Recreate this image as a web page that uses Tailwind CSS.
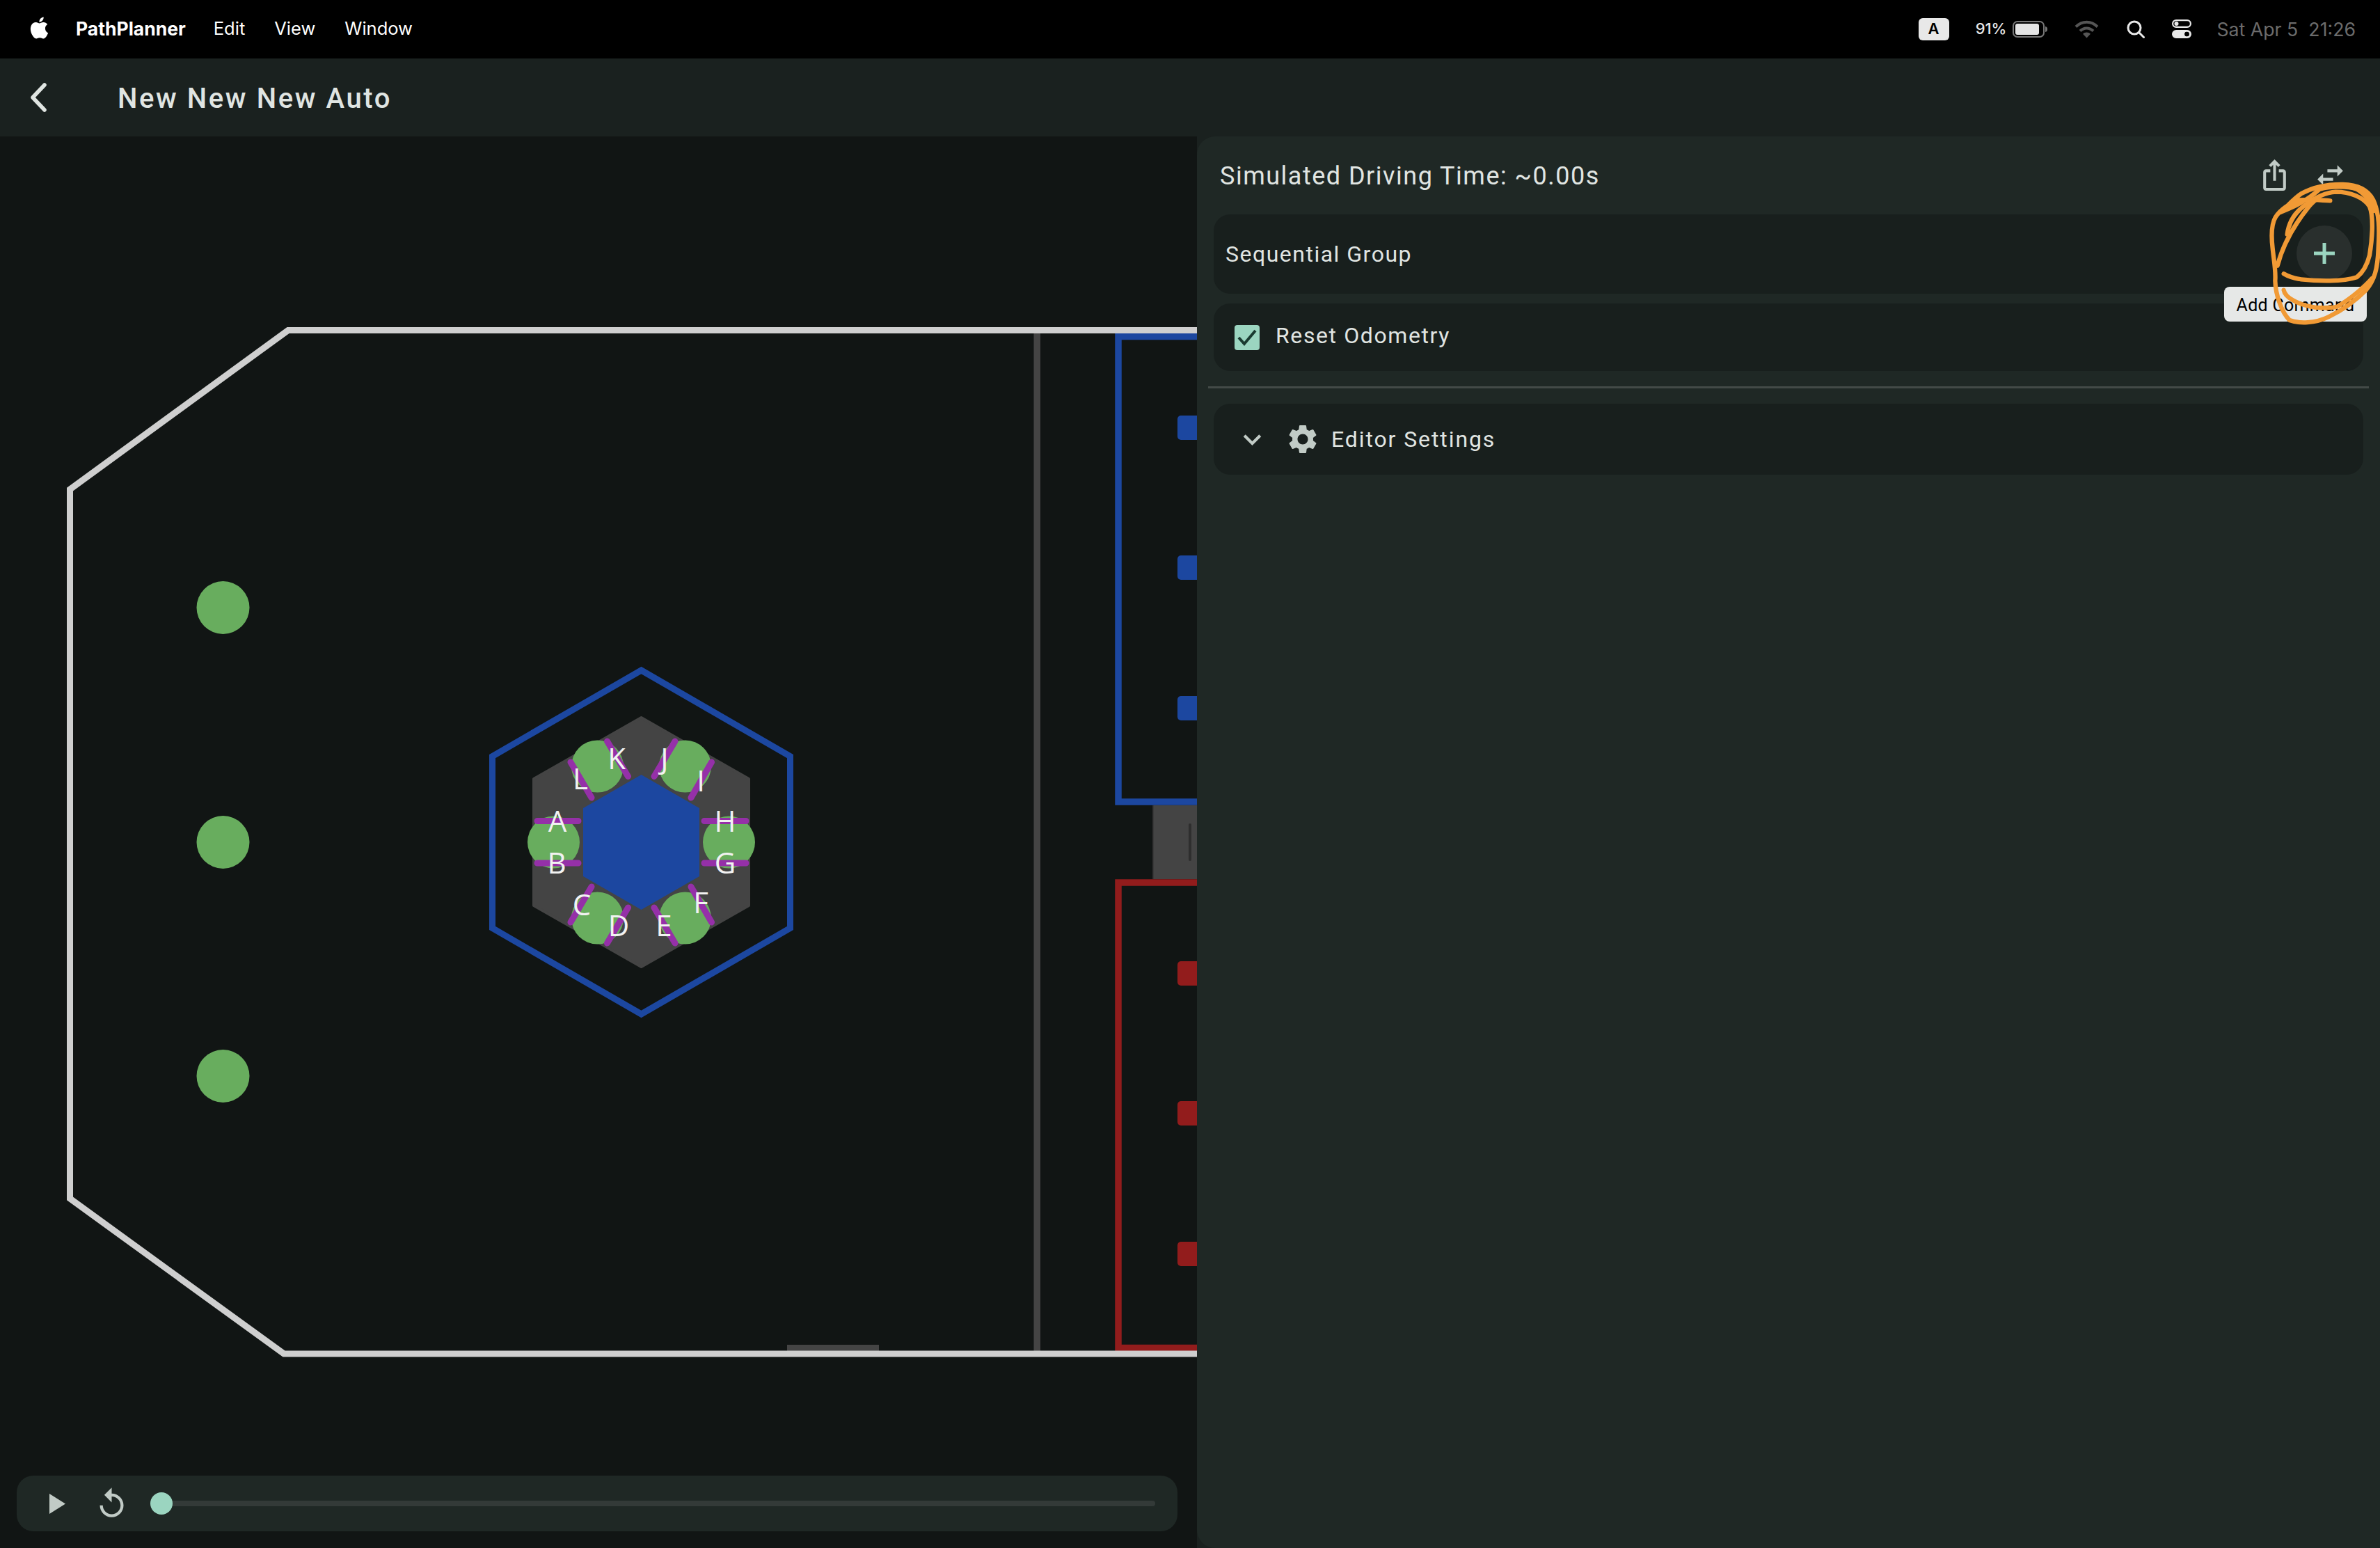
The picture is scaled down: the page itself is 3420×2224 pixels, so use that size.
<!DOCTYPE html>
<html>
<head>
<meta charset="utf-8">
<script src="https://cdn.jsdelivr.net/npm/@tailwindcss/browser@4"></script>
</head>
<body class="m-0 bg-[#111514]">
<div class="relative w-[3420px] h-[2224px] overflow-hidden flex flex-col bg-[#111514] font-['Roboto',sans-serif]">

  <!-- macOS menu bar -->
  <header class="h-[84px] shrink-0 bg-black flex items-center justify-between font-['Inter',sans-serif] text-white text-[25.5px]">
    <div class="flex items-center pl-[41px] pb-[1px]">
      <svg class="w-[31px] h-[32px] mt-[-4px]" viewBox="0 0 24 24" fill="#fff"><path d="M12.152 6.896c-.948 0-2.415-1.078-3.96-1.04-2.04.027-3.91 1.183-4.961 3.014-2.117 3.675-.546 9.103 1.519 12.09 1.013 1.454 2.208 3.09 3.792 3.039 1.52-.065 2.09-.987 3.935-.987 1.831 0 2.35.987 3.96.948 1.637-.026 2.676-1.48 3.676-2.948 1.156-1.688 1.636-3.325 1.662-3.415-.039-.013-3.182-1.221-3.22-4.857-.026-3.04 2.48-4.494 2.597-4.559-1.429-2.09-3.623-2.324-4.39-2.376-2-.156-3.675 1.09-4.61 1.09zM15.53 3.83c.843-1.012 1.4-2.427 1.245-3.83-1.207.052-2.662.805-3.532 1.818-.78.896-1.454 2.338-1.273 3.714 1.338.104 2.715-.688 3.559-1.701"/></svg>
      <span class="ml-[37px] font-bold text-[26.5px]">PathPlanner</span>
      <span class="ml-[40px]">Edit</span>
      <span class="ml-[42px]">View</span>
      <span class="ml-[42px]">Window</span>
    </div>
    <div class="flex items-center pr-[35px]">
      <span class="w-[44px] h-[32px] rounded-[6px] bg-[#e8e8e8] text-black text-[22px] font-semibold flex items-center justify-center">A</span>
      <span class="ml-[38px] text-[22px] font-medium text-[#e8e8e8]">91%</span>
      <svg class="ml-[9px] w-[50px] h-[24px]" viewBox="0 0 50 24"><rect x="1" y="1" width="44" height="22" rx="6" fill="none" stroke="#777" stroke-width="2"/><rect x="4" y="4" width="34" height="16" rx="3" fill="#e4e4e4"/><path d="M47 8c2.5 .6 3 2 3 4s-.5 3.400-3 4z" fill="#777"/></svg>
      <svg class="ml-[39px] w-[35px] h-[26px]" viewBox="0 0 35 26" fill="none" stroke="#555" stroke-width="4"><path d="M2 9.500C11 .5 24 .5 33 9.500"/><path d="M8 15.500c5.500-5.500 13.500-5.500 19 0"/><path d="M17.500 25.500l-5.500-5.800c3-2.800 8-2.800 11 0z" fill="#555" stroke="none"/></svg>
      <svg class="ml-[40px] w-[26px] h-[26px]" viewBox="0 0 26 26" fill="none" stroke="#e8e8e8" stroke-width="3" stroke-linecap="round"><circle cx="11" cy="11" r="9"/><path d="M17.500 17.500l7 7"/></svg>
      <svg class="ml-[39px] w-[28px] h-[27px]" viewBox="0 0 28 27"><path fill-rule="evenodd" fill="#e8e8e8" d="M6 0h16a6 6 0 0 1 0 12H6A6 6 0 0 1 6 0zm0 2.200a3.800 3.800 0 0 0 0 7.600h16a3.800 3.800 0 0 0 0-7.600z"/><circle cx="6.500" cy="6" r="3" fill="#e8e8e8"/><path fill="#e8e8e8" fill-rule="evenodd" d="M6 15h16a6 6 0 0 1 0 12H6a6 6 0 0 1 0-12zm15.500 2.800a3.200 3.200 0 1 0 0 6.400 3.200 3.200 0 0 0 0-6.400z"/><circle cx="21.500" cy="21" r="3.200" fill="#000"/></svg>
      <span class="ml-[36px] text-[#6b6b6b] text-[26.7px] whitespace-pre">Sat Apr 5  21:26</span>
    </div>
  </header>

  <!-- App bar -->
  <div class="h-[112px] shrink-0 bg-[#1a211f] flex items-center">
    <svg class="ml-[44px] w-[24px] h-[42px]" viewBox="0 0 24 42" fill="none" stroke="#e0e5e2" stroke-width="5.500" stroke-linecap="round" stroke-linejoin="round"><path d="M20 3L3 21l17 18"/></svg>
    <span class="ml-[101px] pt-[3px] text-[40px] font-medium tracking-[2.6px] text-[#e0e5e2]">New New New Auto</span>
  </div>

  <main class="flex-1 flex min-h-0 bg-[#1a211f]">
    <!-- Field canvas -->
    <section class="relative w-[1720px] shrink-0 bg-[#111514]">
      <svg class="absolute left-0 top-[-196px] w-[1720px] h-[2224px]" viewBox="0 0 1720 2224" font-family="'Open Sans',sans-serif">
        <!-- blue barge / red barge -->
        <path d="M1720 483.500H1607V1152H1720" fill="none" stroke="#1c47a0" stroke-width="9.500"/>
        <path d="M1720 1268H1607V1936.500H1720" fill="none" stroke="#921c1c" stroke-width="9.500"/>
        <rect x="1657" y="1157" width="63" height="106" fill="#444444"/>
        <rect x="1656" y="1157" width="1.500" height="106" fill="#2e2e2e"/>
        <rect x="1708" y="1183" width="4" height="54" rx="2" fill="#2e2e2e"/>
        <rect x="1692" y="597" width="40" height="35" rx="5" fill="#1c47a0"/>
        <rect x="1692" y="798" width="40" height="35" rx="5" fill="#1c47a0"/>
        <rect x="1692" y="1000" width="40" height="35" rx="5" fill="#1c47a0"/>
        <rect x="1692" y="1381" width="40" height="35" rx="5" fill="#921c1c"/>
        <rect x="1692" y="1582" width="40" height="35" rx="5" fill="#921c1c"/>
        <rect x="1692" y="1784" width="40" height="35" rx="5" fill="#921c1c"/>
        <!-- centre line + outer wall -->
        <rect x="1485.500" y="478" width="9.500" height="1464" fill="#444444"/>
        <rect x="1131" y="1932" width="132" height="9" fill="#444444"/>
        <path d="M1730 474.500H414L100.500 703V1722L408 1945H1730" fill="none" stroke="#cfcfcf" stroke-width="9"/>
        <!-- stage cubes -->
        <circle cx="320.500" cy="873" r="38" fill="#68ad5e"/>
        <circle cx="320.500" cy="1210" r="38" fill="#68ad5e"/>
        <circle cx="320.500" cy="1546" r="38" fill="#68ad5e"/>
        <!-- Reef -->
        <path d="M921.500 963L1135.500 1086.500V1333.500L921.500 1457L707.500 1333.500V1086.500Z" fill="none" stroke="#1c47a0" stroke-width="9"/>
        <path d="M921.500 1031L1076 1119V1301L921.500 1389L767 1301V1119Z" fill="#444444" stroke="#444444" stroke-width="4" stroke-linejoin="round"/>
        <path d="M921.500 1113L1005 1161V1259L921.500 1307L838 1259V1161Z" fill="#1c47a0"/>
        <g fill="#68ad5e">
          <circle cx="795.500" cy="1210" r="37.500"/><circle cx="1047.500" cy="1210" r="37.500"/>
          <circle cx="858.500" cy="1101" r="37.500"/><circle cx="984.500" cy="1101" r="37.500"/>
          <circle cx="858.500" cy="1319" r="37.500"/><circle cx="984.500" cy="1319" r="37.500"/>
        </g>
        <g stroke="#9530a8" stroke-width="9" stroke-linecap="round" fill="none">
          <path d="M772 1179.500H831M772 1240H831M1012 1179.500H1072M1012 1240H1072"/>
          <path d="M872.500 1065L902.500 1115.500M820 1095L850 1146M970 1065L940 1115.500M1022.500 1095L993 1146"/>
          <path d="M850 1274L820 1325M902.500 1304L872.500 1355M940 1304L970 1355M993 1274L1022.500 1325"/>
        </g>
        <g fill="#f2f2f2" font-size="42" font-weight="500" text-anchor="middle">
          <text x="801" y="1195">A</text><text x="800" y="1255">B</text>
          <text x="836" y="1315">C</text><text x="889" y="1345">D</text>
          <text x="954" y="1345">E</text><text x="1007" y="1312">F</text>
          <text x="1042" y="1255">G</text><text x="1042" y="1195">H</text>
          <text x="1007" y="1137">I</text><text x="955" y="1105">J</text>
          <text x="886" y="1105">K</text><text x="834" y="1134">L</text>
        </g>
      </svg>
      <!-- Playback bar -->
      <div class="absolute left-[24px] top-[1924px] w-[1668px] h-[80px] rounded-[24px] bg-[#1f2825] flex items-center">
        <svg class="ml-[47px] w-[23px] h-[29px]" viewBox="0 0 23 29"><path d="M0 0L23 14.500 0 29z" fill="#c1cbc6"/></svg>
        <svg class="ml-[41px] w-[51px] h-[51px]" viewBox="0 0 24 24"><path fill="#c1cbc6" d="M12 5V1L7 6l5 5V7c3.310 0 6 2.690 6 6s-2.690 6-6 6-6-2.690-6-6H4c0 4.420 3.580 8 8 8s8-3.580 8-8-3.580-8-8-8z"/></svg>
        <div class="relative ml-[30px] w-[1444px] h-[8px] rounded-full bg-[#333a38]">
          <span class="absolute left-0 top-[-12px] w-[32px] h-[32px] rounded-full bg-[#9bd5c0]"></span>
        </div>
      </div>
    </section>

    <!-- Side panel -->
    <aside class="flex-1 bg-[#1f2825] rounded-l-[26px] flex flex-col px-[24px] text-[#e0e5e2]">
      <div class="h-[112px] shrink-0 flex items-center">
        <span class="ml-[9px] pt-[2px] text-[36px] tracking-[1.5px]">Simulated Driving Time: ~0.00s</span>
      </div>
      <div class="h-[114px] shrink-0 rounded-[24px] bg-[#181f1d] flex items-center pl-[17px] text-[32px] tracking-[1.5px]">Sequential Group</div>
      <div class="mt-[14px] h-[97px] shrink-0 rounded-[24px] bg-[#181f1d] flex items-center pl-[30px] text-[32px] tracking-[1.6px]">
        <span class="w-[36px] h-[36px] rounded-[4px] bg-[#9bd5c0] flex items-center justify-center">
          <svg class="w-[30px] h-[30px]" viewBox="0 0 30 30" fill="none" stroke="#1a3a30" stroke-width="4"><path d="M3 15l8 9L27 5"/></svg>
        </span>
        <span class="ml-[23px] mb-[6px]">Reset Odometry</span>
      </div>
      <div class="mt-[22px] mx-[-8px] h-[3px] shrink-0 bg-[#434a47]"></div>
      <div class="mt-[22px] h-[102px] shrink-0 rounded-[24px] bg-[#181f1d] flex items-center text-[32px] tracking-[1.9px]">
        <svg class="ml-[30px] w-[51px] h-[51px]" viewBox="0 0 24 24"><path fill="#c1cbc6" d="M16.590 8.590 12 13.170 7.410 8.590 6 10l6 6 6-6z"/></svg>
        <svg class="ml-[22px] w-[50px] h-[50px]" viewBox="0 0 24 24"><path fill="#c1cbc6" d="M19.140 12.940c.04-.3.06-.61.06-.94 0-.32-.02-.64-.07-.94l2.030-1.580c.18-.14.23-.41.12-.61l-1.920-3.320c-.12-.22-.37-.29-.59-.22l-2.390.96c-.5-.38-1.030-.7-1.620-.94l-.36-2.540c-.04-.24-.24-.41-.48-.41h-3.840c-.24 0-.43.17-.47.41l-.36 2.540c-.59.24-1.130.57-1.620.94l-2.390-.96c-.22-.08-.47 0-.59.22L2.740 8.870c-.12.21-.08.47.12.61l2.030 1.580c-.05.3-.09.63-.09.94s.02.64.07.94l-2.030 1.580c-.18.14-.23.41-.12.61l1.920 3.320c.12.22.37.29.59.22l2.390-.96c.5.38 1.030.7 1.620.94l.36 2.54c.05.24.24.41.48.41h3.840c.24 0 .44-.17.47-.41l.36-2.54c.59-.24 1.130-.56 1.620-.94l2.390.96c.22.08.47 0 .59-.22l1.920-3.320c.12-.22.07-.47-.12-.61l-2.010-1.580zM12 15.600c-1.980 0-3.600-1.620-3.600-3.600s1.620-3.600 3.600-3.600 3.600 1.620 3.600 3.600-1.620 3.600-3.600 3.600z"/></svg>
        <span class="ml-[16px]">Editor Settings</span>
      </div>
    </aside>
  </main>

  <!-- Header action icons, add button, tooltip and hand-drawn annotation lie over the panel -->
  <svg class="absolute left-[3244px] top-[227px] w-[49px] h-[49px]" viewBox="0 0 24 24"><path fill="#c1cbc6" d="M16 5l-1.420 1.420-1.590-1.590V16h-1.980V4.830L9.420 6.420 8 5l4-4 4 4zm4 5v11c0 1.100-.9 2-2 2H6c-1.110 0-2-.9-2-2V10c0-1.110.89-2 2-2h3v2H6v11h12V10h-3V8h3c1.100 0 2 .89 2 2z"/></svg>
  <svg class="absolute left-[3324px] top-[227px] w-[49px] h-[49px]" viewBox="0 0 24 24"><path fill="#c1cbc6" d="M6.990 11L3 15l3.990 4v-3H14v-2H6.990v-3zM21 9l-4-4v3h-7v2h7v3l4-4z"/></svg>
  <div class="absolute left-[3300px] top-[324px] w-[80px] h-[80px] rounded-full bg-[#292f2d] flex items-center justify-center">
    <svg class="w-[30px] h-[30px]" viewBox="0 0 30 30" fill="#9bd5c0"><path d="M12.500 0h5v12.500H30v5H17.500V30h-5V17.500H0v-5h12.500z"/></svg>
  </div>
  <div class="absolute left-[3196px] top-[412px] w-[205px] h-[50px] pt-[3px] rounded-[8px] bg-[#e6e8e7] flex items-center justify-center text-black text-[25px] tracking-[0.3px]">Add Command</div>
  <svg class="absolute left-[3100px] top-[190px] w-[320px] h-[300px]" viewBox="0 0 960 900" fill="none" stroke="#f19a35" stroke-width="19" stroke-linecap="round" stroke-linejoin="round">
    <path d="M745 295C690 292 650 288 615 292C570 305 530 335 510 365C492 395 490 440 497 500C502 550 512 600 508 640C510 700 535 775 570 810C610 825 680 825 740 795C800 765 860 720 900 680C935 640 950 590 953 500C958 420 958 350 930 290C905 245 860 226 800 225C740 224 680 232 620 265C590 285 560 320 530 345C590 320 640 300 700 245C750 232 820 232 860 245C895 265 920 300 932 340"/>
    <path d="M560 440C565 400 585 350 640 312C680 282 725 260 770 257C830 257 890 280 915 320C935 370 925 470 915 530C905 570 885 605 860 625C800 645 690 642 620 634C590 630 565 622 545 610"/>
    <path d="M518 575C540 490 590 400 650 325C665 305 680 295 695 280"/>
    <path d="M545 680C550 710 600 742 680 755C720 758 750 758 775 752C830 720 890 670 925 630"/>
  </svg>
</div>
</body>
</html>
